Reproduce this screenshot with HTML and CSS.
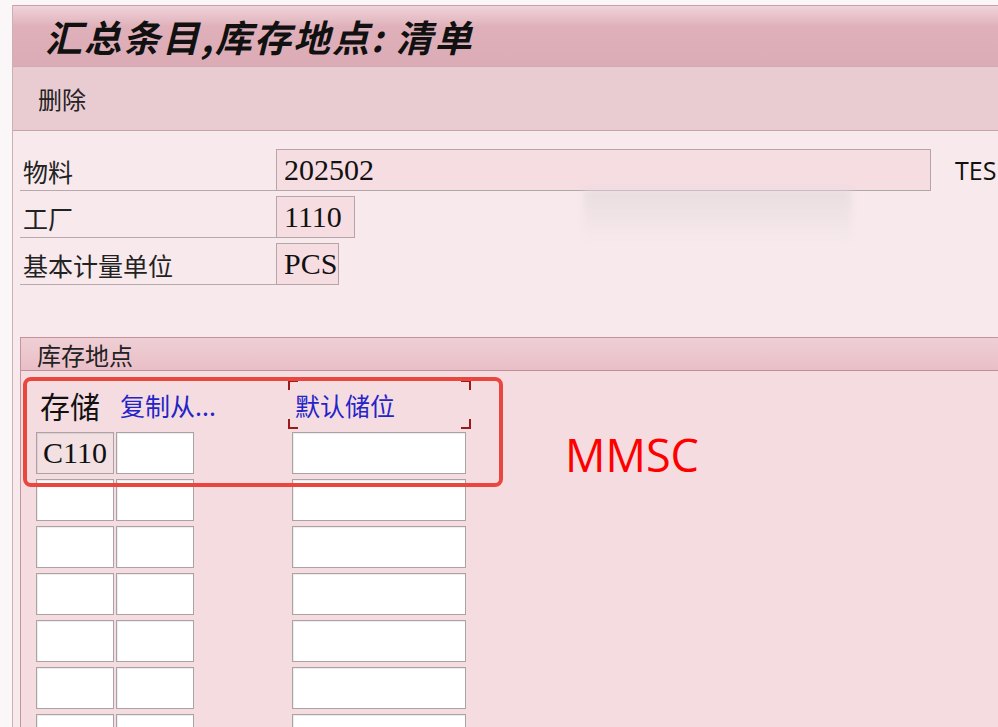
FILE: index.html
```html
<!DOCTYPE html>
<html lang="zh">
<head>
    <meta charset="UTF-8">
    <meta name="viewport" content="width=device-width, initial-scale=1.0">
    <title>汇总条目,库存地点: 清单</title>
    <link rel="stylesheet" href="styles.css">
</head>
<body>
    <div class="window">
        <div class="title-bar">
            <h1>汇总条目,库存地点: 清单</h1>
        </div>
        <div class="toolbar">
            <span class="tool-btn">删除</span>
        </div>

        <div class="content">
            <div class="form-rows">
                <div class="form-row">
                    <div class="label">物料</div>
                    <div class="field field-wide">202502</div>
                    <div class="desc">TES</div>
                </div>
                <div class="form-row">
                    <div class="label">工厂</div>
                    <div class="field field-plant">1110</div>
                </div>
                <div class="form-row">
                    <div class="label">基本计量单位</div>
                    <div class="field field-unit">PCS</div>
                </div>
            </div>

            <!-- 模糊处理区域 -->
            <div class="blur-mask"></div>

            <div class="section">
                <div class="section-head">库存地点</div>
                <div class="section-body">
                    <div class="grid">
                        <div class="col-head">存储</div>
                        <div class="col-head col-link">复制从...</div>
                        <div></div>
                        <div class="col-head col-link col-focus">默认储位</div>

                        <div class="cell cell-key">C110</div>
                        <div class="cell"></div>
                        <div></div>
                        <div class="cell"></div>

                        <div class="cell"></div><div class="cell"></div><div></div><div class="cell"></div>
                        <div class="cell"></div><div class="cell"></div><div></div><div class="cell"></div>
                        <div class="cell"></div><div class="cell"></div><div></div><div class="cell"></div>
                        <div class="cell"></div><div class="cell"></div><div></div><div class="cell"></div>
                        <div class="cell"></div><div class="cell"></div><div></div><div class="cell"></div>
                        <div class="cell"></div><div class="cell"></div><div></div><div class="cell"></div>
                    </div>
                </div>
            </div>
        </div>
    </div>

    <!-- 标注 -->
    <div class="mark-box"></div>
    <div class="mark-text">MMSC</div>
</body>
</html>
```

FILE: styles.css
```css
body {
    margin: 0;
    padding: 0;
    height: 727px;
    overflow: hidden;
    background-color: #fbf6f7;
    font-family: "Liberation Serif", "Noto Sans CJK SC", serif;
    color: #111;
}

.window {
    margin: 5px 0 0 12px;
    border-left: 1px solid #cdb0b6;
    height: 722px;
    background-color: #f7e9ec;
}

.title-bar {
    height: 60px;
    border-top: 1px solid #c9a0a9;
    background: linear-gradient(to bottom, #f0d3d9 0%, #dfb0ba 35%, #dcacb6 100%);
    display: flex;
    align-items: center;
    padding-left: 32px;
}

.title-bar h1 {
    margin: 0;
    font-family: "Noto Sans CJK SC", "Liberation Serif", sans-serif;
    font-size: 37px;
    font-weight: bold;
    font-style: italic;
    letter-spacing: 2px;
    color: #111;
    line-height: 1;
}

.toolbar {
    height: 63px;
    border-top: 1px solid #d5a9b2;
    border-bottom: 1px solid #c9a3aa;
    background-color: #e9cbd2;
    display: flex;
    align-items: center;
    padding-left: 25px;
}

.tool-btn {
    font-family: "Noto Sans CJK SC", sans-serif;
    font-size: 24px;
    color: #222;
}

.content {
    position: relative;
    padding: 18px 0 0 7px;
}

.form-rows {
    display: flex;
    flex-direction: column;
    gap: 5px;
}

.form-row {
    display: flex;
    align-items: stretch;
    height: 42px;
}

.label {
    width: 256px;
    box-sizing: border-box;
    border-bottom: 1px solid #b9a9ad;
    padding-left: 3px;
    display: flex;
    align-items: center;
    padding-top: 2px;
    font-family: "Noto Sans CJK SC", sans-serif;
    font-size: 25px;
    color: #222;
}

.field {
    box-sizing: border-box;
    height: 42px;
    border: 1px solid #b3a6a9;
    background-color: #f5dde2;
    padding-left: 7px;
    display: flex;
    align-items: center;
    font-size: 30px;
    color: #111;
}

.field-wide { width: 655px; }
.field-plant { width: 79px; }
.field-unit { width: 63px; }

.desc {
    margin-left: 24px;
    display: flex;
    align-items: center;
    font-family: "Open Sans", "Liberation Sans", sans-serif;
    font-size: 25px;
    color: #111;
}

.blur-mask {
    position: absolute;
    left: 571px;
    top: 59px;
    width: 267px;
    height: 48px;
    background: linear-gradient(to bottom, rgba(230, 218, 222, 0.8), rgba(245, 232, 235, 0.3));
    filter: blur(3px);
}

.section {
    margin-top: 52px;
    border-left: 1px solid #c4939c;
    border-top: 1px solid #c4939c;
}

.section-head {
    height: 33px;
    box-sizing: border-box;
    border-bottom: 1px solid #bf8e97;
    background: linear-gradient(to bottom, #efcfd5, #e9bfc7);
    padding-left: 16px;
    display: flex;
    align-items: center;
    font-family: "Noto Sans CJK SC", sans-serif;
    font-size: 24px;
    color: #222;
}

.section-body {
    background-color: #f5dce1;
    padding: 6px 0 0 15px;
    height: 400px;
}

.grid {
    display: grid;
    grid-template-columns: 78px 78px 94px 174px;
    grid-auto-rows: 42px;
    grid-template-rows: 50px;
    column-gap: 2px;
    row-gap: 5px;
}

.col-head {
    display: flex;
    align-items: center;
    padding: 6px 0 0 4px;
    white-space: nowrap;
    font-family: "Noto Sans CJK SC", sans-serif;
    font-size: 30px;
    color: #111;
}

.col-link {
    font-size: 25px;
    color: #2424c8;
    padding-left: 4px;
}

.col-focus {
    position: relative;
    padding-left: 3px;
}

/* 焦点框四角 */
.col-focus::before,
.col-focus::after {
    content: "";
    position: absolute;
    left: -4px;
    right: -5px;
    top: 3px;
    bottom: -2px;
    pointer-events: none;
}

.col-focus::before {
    background:
        linear-gradient(#9b1b1b, #9b1b1b) left top / 10px 2px no-repeat,
        linear-gradient(#9b1b1b, #9b1b1b) left top / 2px 10px no-repeat,
        linear-gradient(#9b1b1b, #9b1b1b) right top / 10px 2px no-repeat,
        linear-gradient(#9b1b1b, #9b1b1b) right top / 2px 10px no-repeat;
}

.col-focus::after {
    background:
        linear-gradient(#9b1b1b, #9b1b1b) left bottom / 10px 2px no-repeat,
        linear-gradient(#9b1b1b, #9b1b1b) left bottom / 2px 10px no-repeat,
        linear-gradient(#9b1b1b, #9b1b1b) right bottom / 10px 2px no-repeat,
        linear-gradient(#9b1b1b, #9b1b1b) right bottom / 2px 10px no-repeat;
}

.cell {
    box-sizing: border-box;
    border: 1px solid #aaa2a4;
    background-color: #fff;
    box-shadow: inset 1px 1px 1px rgba(0, 0, 0, 0.08);
}

.cell-key {
    background-color: #f2e0e3;
    display: flex;
    align-items: center;
    padding-left: 6px;
    font-size: 30px;
    color: #111;
}

.mark-box {
    position: absolute;
    left: 23px;
    top: 377px;
    width: 472px;
    height: 102px;
    border: 4px solid #e9473e;
    border-radius: 8px;
}

.mark-text {
    position: absolute;
    left: 565px;
    top: 428px;
    font-family: "Open Sans", "Liberation Sans", sans-serif;
    font-size: 45px;
    line-height: 1.2;
    color: #ff0000;
}
```
